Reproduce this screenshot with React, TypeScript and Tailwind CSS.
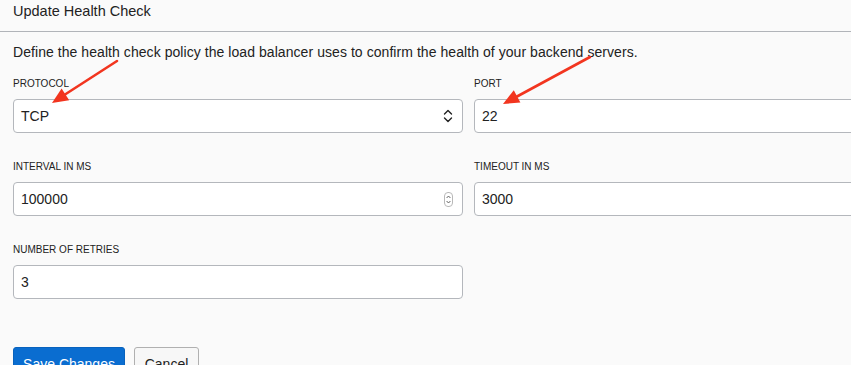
import React from "react";

function Chevrons() {
  return (
    <svg width="10" height="16" viewBox="0 0 10 16" className="shrink-0">
      <path d="M1.5 6 L5 2.5 L8.5 6" fill="none" stroke="#222" strokeWidth="1.4" strokeLinecap="round" strokeLinejoin="round" />
      <path d="M1.5 10 L5 13.5 L8.5 10" fill="none" stroke="#222" strokeWidth="1.4" strokeLinecap="round" strokeLinejoin="round" />
    </svg>
  );
}

function Spinner() {
  return (
    <svg width="9" height="15" viewBox="0 0 9 15" className="shrink-0">
      <rect x="0.5" y="0.5" width="8" height="14" rx="3.5" fill="#fff" stroke="#b8b8b8" />
      <path d="M2.6 6 L4.5 4 L6.4 6" fill="none" stroke="#555" strokeWidth="0.9" />
      <path d="M2.6 9 L4.5 11 L6.4 9" fill="none" stroke="#555" strokeWidth="0.9" />
    </svg>
  );
}

function Field({ label, value, right }: { label: string; value: string; right?: React.ReactNode }) {
  return (
    <div className="flex flex-col">
      <div className="text-[10px] leading-[12px] text-[#222] mb-[9px]">{label}</div>
      <div className="h-[34px] bg-white border border-[#b4b7bc] rounded-[4px] flex items-center pl-[7px] pr-[9px] text-[14px] text-[#222]">
        <span className="flex-1">{value}</span>
        {right}
      </div>
    </div>
  );
}

export default function App() {
  return (
    <div className="relative w-[851px] h-[365px] overflow-hidden bg-[#fafafa] text-[#222]" style={{ fontFamily: '"Liberation Sans", Arial, sans-serif' }}>
      <div className="h-[32px] border-b border-[#b1b4b9] pl-[13px] pt-[1px] text-[14.5px] leading-[20px] text-[#222]">
        Update Health Check
      </div>
      <div className="pl-[13px] pt-[10px]">
        <div className="text-[14px] leading-[20px] tracking-[0.06px] text-[#222]">
          Define the health check policy the load balancer uses to confirm the health of your backend servers.
        </div>
        <div className="mt-[16px] grid grid-cols-[450px_450px] gap-x-[11px] gap-y-[28px]">
          <Field label="PROTOCOL" value="TCP" right={<Chevrons />} />
          <Field label="PORT" value="22" />
          <Field label="INTERVAL IN MS" value="100000" right={<Spinner />} />
          <Field label="TIMEOUT IN MS" value="3000" />
          <Field label="NUMBER OF RETRIES" value="3" />
        </div>
        <div className="mt-[48px] flex gap-[9px]">
          <button className="h-[34px] w-[112px] rounded-[3px] bg-[#0a6dd0] text-white text-[14px] border border-[#0862bd]">
            Save Changes
          </button>
          <button className="h-[34px] w-[65px] rounded-[3px] bg-[#f7f7f7] text-[#222] text-[14px] border border-[#b0b0b0]">
            Cancel
          </button>
        </div>
      </div>
      <svg className="absolute left-0 top-0 pointer-events-none" width="851" height="365">
        <line x1="117" y1="61" x2="65" y2="94.5" stroke="#f2351f" strokeWidth="2.6" strokeLinecap="round" />
        <polygon points="52,103 69.2,100.2 61.6,88.4" fill="#f2351f" />
        <line x1="590" y1="57" x2="517" y2="96.5" stroke="#f2351f" strokeWidth="2.6" strokeLinecap="round" />
        <polygon points="503,104 520.4,102.6 513.8,90.2" fill="#f2351f" />
      </svg>
    </div>
  );
}
